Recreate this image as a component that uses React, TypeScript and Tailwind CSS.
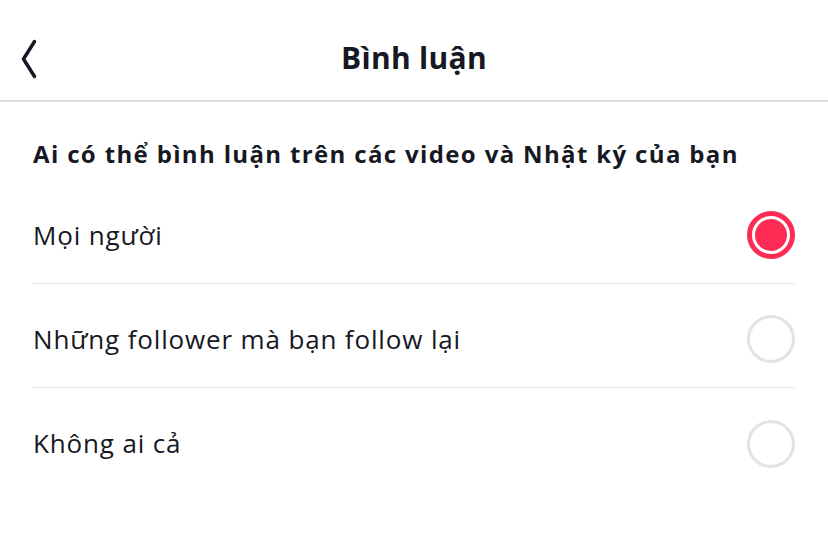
import { useState } from "react";

const options = [
  "Mọi người",
  "Những follower mà bạn follow lại",
  "Không ai cả",
];

function BackIcon() {
  return (
    <svg width="16" height="40" viewBox="0 0 16 40" fill="none">
      <path
        d="M13.5 2.5 L2.5 20 L13.5 37.5"
        stroke="#161823"
        strokeWidth="3.5"
        strokeLinecap="round"
        strokeLinejoin="round"
      />
    </svg>
  );
}

export default function App() {
  const [selected, setSelected] = useState(0);

  return (
    <div className="h-[540px] w-[828px] bg-white text-[#161823] font-['Open_Sans','Noto_Sans',sans-serif]">
      {/* header */}
      <div className="relative flex h-[102px] items-center justify-center border-b-2 border-[#dcdcdc]">
        <button className="absolute left-[21px] top-[39px]">
          <BackIcon />
        </button>
        <h1 className="pt-[14px] text-[30px] font-bold tracking-[0.3px]">Bình luận</h1>
      </div>

      {/* section */}
      <div className="px-[33px]">
        <p className="pt-[34px] text-[24px] font-bold tracking-[1.35px]">
          Ai có thể bình luận trên các video và Nhật ký của bạn
        </p>
        <div className="mt-[8px]">
          {options.map((label, i) => (
            <div
              key={label}
              onClick={() => setSelected(i)}
              className={`flex h-[104px] cursor-pointer items-center justify-between pt-[7px] ${
                i < options.length - 1 ? "border-b border-[#e5e5e5]" : ""
              }`}
            >
              <span className="text-[26px] tracking-[0.85px]">{label}</span>
              {selected === i ? (
                <span className="flex h-[48px] w-[48px] items-center justify-center rounded-full border-[5px] border-[#fe2c55]">
                  <span className="h-[32px] w-[32px] rounded-full bg-[#fe2c55]" />
                </span>
              ) : (
                <span className="h-[48px] w-[48px] rounded-full border-[3px] border-[#e3e3e3]" />
              )}
            </div>
          ))}
        </div>
      </div>
    </div>
  );
}
